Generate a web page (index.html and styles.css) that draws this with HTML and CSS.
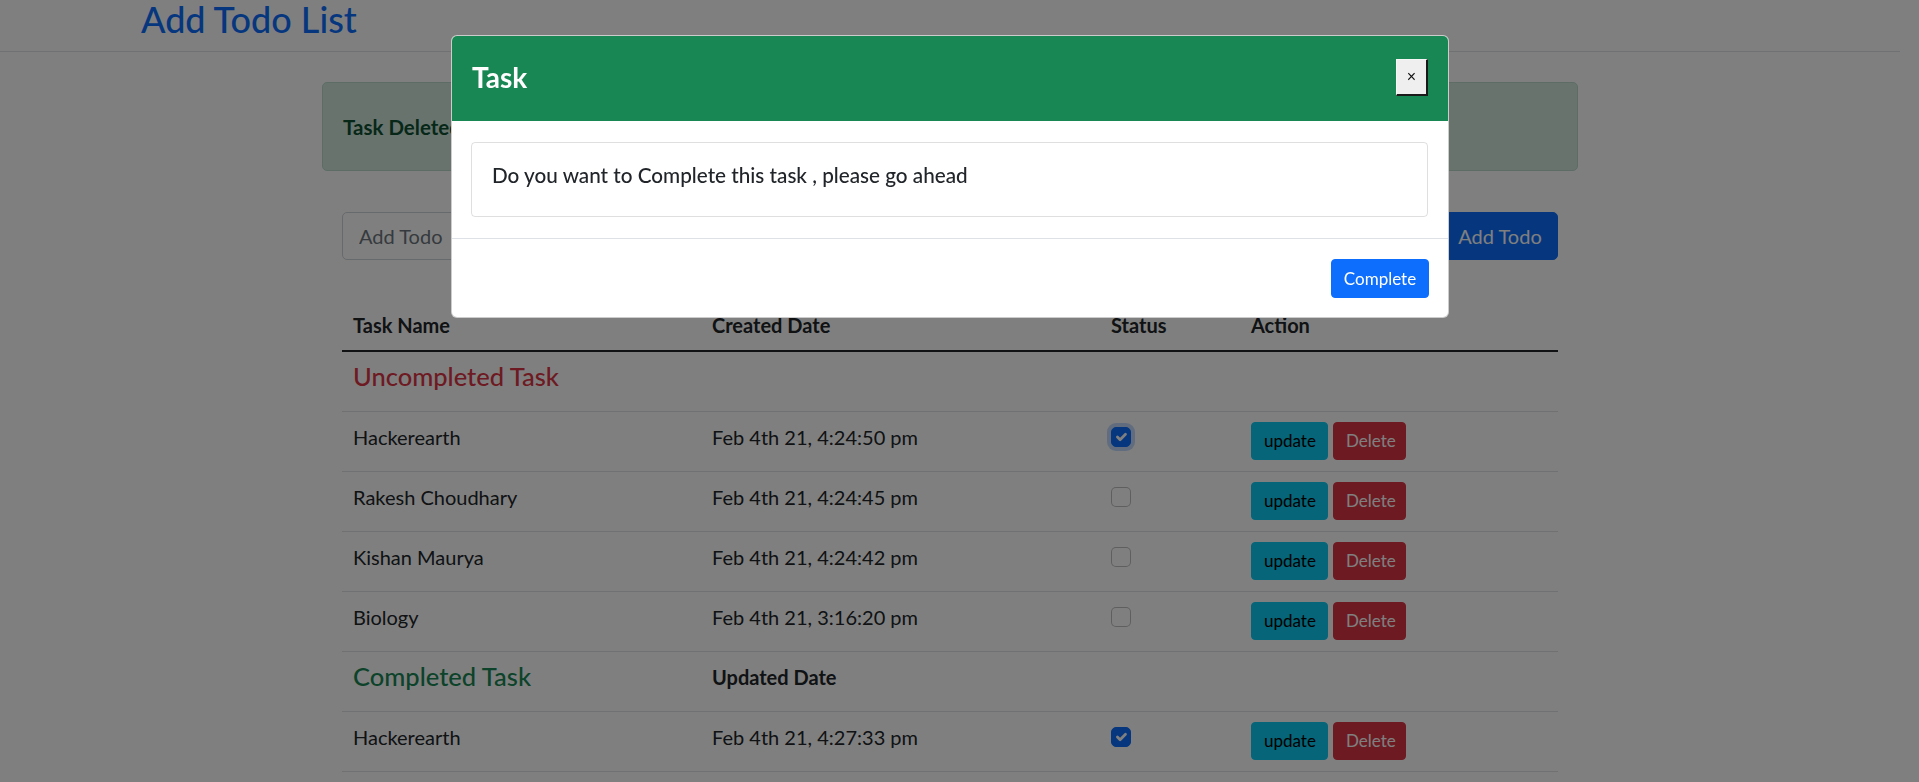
FILE: index.html
```html
<!DOCTYPE html>
<html lang="en">
<head>
<meta charset="utf-8">
<title>Add Todo List</title>
<link rel="stylesheet" href="styles.css">
</head>
<body>
<header class="topbar">
  <h1 class="brand">Add Todo List</h1>
</header>

<main class="container">
  <div class="alert"><strong>Task Deleted Successfully</strong></div>

  <form class="add-form">
    <input class="add-input" type="text" placeholder="Add Todo">
    <button type="button" class="btn btn-primary btn-lg add-btn">Add Todo</button>
  </form>

  <table class="todo-table">
    <colgroup>
      <col class="col-name">
      <col class="col-date">
      <col class="col-status">
      <col class="col-action">
    </colgroup>
    <thead>
      <tr>
        <th>Task Name</th>
        <th>Created Date</th>
        <th>Status</th>
        <th>Action</th>
      </tr>
    </thead>
    <tbody>
      <tr class="group-row">
        <td><h4 class="group-title text-danger">Uncompleted Task</h4></td>
        <td></td><td></td><td></td>
      </tr>
      <tr>
        <td>Hackerearth</td>
        <td>Feb 4th 21, 4:24:50 pm</td>
        <td><span class="check checked focused"><svg viewBox="0 0 20 20"><path d="M6 10l3 3l6-6" fill="none" stroke="#fff" stroke-width="3" stroke-linecap="round" stroke-linejoin="round"/></svg></span></td>
        <td><div class="actions"><button type="button" class="btn btn-info">update</button><button type="button" class="btn btn-danger">Delete</button></div></td>
      </tr>
      <tr>
        <td>Rakesh Choudhary</td>
        <td>Feb 4th 21, 4:24:45 pm</td>
        <td><span class="check"></span></td>
        <td><div class="actions"><button type="button" class="btn btn-info">update</button><button type="button" class="btn btn-danger">Delete</button></div></td>
      </tr>
      <tr>
        <td>Kishan Maurya</td>
        <td>Feb 4th 21, 4:24:42 pm</td>
        <td><span class="check"></span></td>
        <td><div class="actions"><button type="button" class="btn btn-info">update</button><button type="button" class="btn btn-danger">Delete</button></div></td>
      </tr>
      <tr>
        <td>Biology</td>
        <td>Feb 4th 21, 3:16:20 pm</td>
        <td><span class="check"></span></td>
        <td><div class="actions"><button type="button" class="btn btn-info">update</button><button type="button" class="btn btn-danger">Delete</button></div></td>
      </tr>
      <tr class="group-row">
        <td><h4 class="group-title text-success">Completed Task</h4></td>
        <td class="sub-head">Updated Date</td>
        <td></td><td></td>
      </tr>
      <tr>
        <td>Hackerearth</td>
        <td>Feb 4th 21, 4:27:33 pm</td>
        <td><span class="check checked"><svg viewBox="0 0 20 20"><path d="M6 10l3 3l6-6" fill="none" stroke="#fff" stroke-width="3" stroke-linecap="round" stroke-linejoin="round"/></svg></span></td>
        <td><div class="actions"><button type="button" class="btn btn-info">update</button><button type="button" class="btn btn-danger">Delete</button></div></td>
      </tr>
    </tbody>
  </table>
</main>

<div class="backdrop"></div>

<div class="modal-layer">
  <div class="modal">
    <div class="modal-header">
      <h3 class="modal-title">Task</h3>
      <button type="button" class="close-btn">×</button>
    </div>
    <div class="modal-body">
      <div class="msg-box">
        <h5 class="msg">Do you want to Complete this task , please go ahead</h5>
      </div>
    </div>
    <div class="modal-footer">
      <button type="button" class="btn btn-primary complete-btn">Complete</button>
    </div>
  </div>
</div>
</body>
</html>
```

FILE: styles.css
```css
* { box-sizing: border-box; }

html, body { height: 100%; }

body {
  margin: 0;
  padding-right: 19px;
  overflow: hidden;
  font-family: Lato, "Open Sans", Arial, sans-serif;
  font-size: 16px;
  line-height: 1.5;
  color: #212529;
  background: #fff;
}

/* ---------- top bar ---------- */
.topbar {
  height: 52px;
  padding-left: 141px;
  border-bottom: 1px solid #dee2e6;
}

.brand {
  margin: 0;
  font-size: 36px;
  font-weight: 500;
  line-height: 1.1;
  color: #0d6efd;
}

/* ---------- main ---------- */
.container {
  width: 1296px;
  margin: 0 auto;
}

.alert {
  margin: 30px 20px 0;
  height: 89px;
  padding: 0 20px;
  display: flex;
  align-items: center;
  background: #d1e7dd;
  border: 1px solid #badbcc;
  border-radius: 5px;
  color: #0f5132;
  font-size: 20.5px;
  line-height: 24px;
}

.alert strong { font-weight: 700; }

.add-form {
  display: flex;
  margin: 41px 40px 0;
  height: 48px;
}

.add-input {
  flex: 1;
  min-width: 0;
  height: 48px;
  padding: 8px 16px;
  font-family: inherit;
  font-size: 20px;
  line-height: 30px;
  color: #212529;
  background: #fff;
  border: 1px solid #ced4da;
  border-radius: 5px 0 0 5px;
  outline: none;
}

.add-input::placeholder { color: #6c757d; }

.btn {
  display: inline-block;
  font-family: inherit;
  font-size: 17px;
  line-height: 24px;
  padding: 6px 12px;
  border: 1px solid transparent;
  border-radius: 4px;
  cursor: pointer;
  text-align: center;
}

.btn-lg {
  font-size: 20px;
  line-height: 30px;
  padding: 8px 14px;
}

.btn-primary { background: #0d6efd; border-color: #0d6efd; color: #fff; }
.btn-info { background: #0dcaf0; border-color: #0dcaf0; color: #000; }
.btn-danger { background: #dc3545; border-color: #dc3545; color: #fff; }

.add-btn {
  height: 48px;
  width: 116px;
  border-radius: 0 5px 5px 0;
}

/* ---------- table ---------- */
.todo-table {
  width: 1216px;
  margin: 40px 40px 0;
  table-layout: fixed;
  border-collapse: separate;
  border-spacing: 0;
  font-size: 20px;
  line-height: 30px;
}

.col-name { width: 359px; }
.col-date { width: 399px; }
.col-status { width: 140px; }
.col-action { width: 318px; }

.todo-table thead tr { height: 52px; }

.todo-table th {
  text-align: left;
  font-weight: 700;
  padding: 10px 11px;
  border-bottom: 2px solid #212529;
  vertical-align: top;
}

.todo-table tbody tr { height: 60px; }

.todo-table td {
  padding: 10px 11px 0;
  vertical-align: top;
  border-bottom: 1px solid #dee2e6;
  white-space: nowrap;
}

.group-title {
  margin: 0;
  font-size: 25.5px;
  font-weight: 500;
  line-height: 1.15;
}

.text-danger { color: #dc3545; }
.text-success { color: #198754; }

.sub-head { font-weight: 700; }

.check {
  display: block;
  width: 20px;
  height: 20px;
  margin-top: 5px;
  background: #fff;
  border: 1px solid rgba(0, 0, 0, 0.25);
  border-radius: 5px;
}

.check svg { display: block; width: 18px; height: 18px; }

.check.checked {
  background: #0d6efd;
  border-color: #0d6efd;
}

.check.focused {
  box-shadow: 0 0 0 4px rgba(13, 110, 253, 0.25);
}

.actions {
  display: flex;
  gap: 5px;
}

.actions .btn-info { width: 77px; }
.actions .btn-danger { width: 73px; }

/* ---------- modal ---------- */
.backdrop {
  position: fixed;
  inset: 0;
  background: rgba(0, 0, 0, 0.5);
}

.modal-layer {
  position: fixed;
  inset: 0;
  padding-right: 19px;
  display: flex;
  justify-content: center;
  align-items: flex-start;
}

.modal {
  width: 998px;
  margin-top: 35px;
  background: #fff;
  border: 1px solid rgba(0, 0, 0, 0.2);
  border-radius: 6px;
  overflow: hidden;
}

.modal-header {
  display: flex;
  align-items: center;
  justify-content: space-between;
  padding: 23px 20px 25px;
  background: #198754;
  color: #fff;
}

.modal-title {
  margin: 0;
  font-size: 28px;
  font-weight: 700;
  line-height: 1.2;
}

.close-btn {
  width: 32px;
  height: 37px;
  padding: 0;
  font-family: Arial, "Liberation Sans", sans-serif;
  font-size: 16px;
  color: #111;
  background: #efefef;
  border-style: solid;
  border-width: 1px 2px 2px 1px;
  border-color: #f7f7f7 #1a1a1a #1a1a1a #f7f7f7;
  border-radius: 0;
}

.modal-body {
  padding: 21px 20px 21px 19px;
}

.msg-box {
  border: 1px solid rgba(0, 0, 0, 0.125);
  border-radius: 4px;
  padding: 20px;
}

.msg {
  margin: 0 0 9px;
  font-size: 20.7px;
  font-weight: 500;
  line-height: 24px;
}

.modal-footer {
  display: flex;
  justify-content: flex-end;
  padding: 20px 19px 19px;
  border-top: 1px solid #dee2e6;
}

.complete-btn {
  width: 98px;
  height: 39px;
  padding: 6px 0;
}
```
